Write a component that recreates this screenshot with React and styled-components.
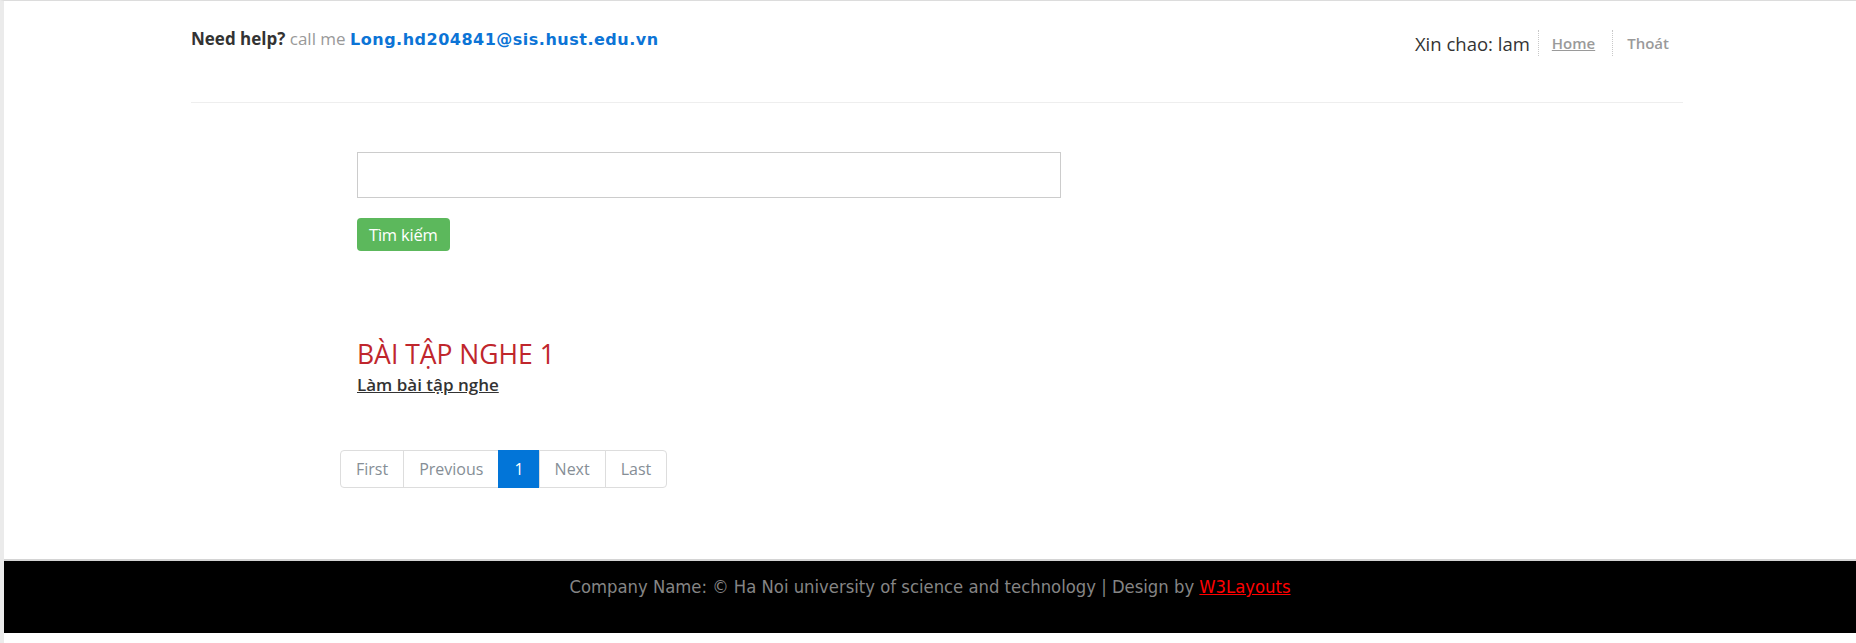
import React from 'react';
import styled, { createGlobalStyle } from 'styled-components';

const GlobalStyle = createGlobalStyle`
  html, body {
    margin: 0;
    padding: 0;
    background: #fff;
  }
  body {
    font-family: "Open Sans", "Liberation Sans", sans-serif;
    color: #333;
  }
`;

const Page = styled.div`
  min-height: 643px;
  border-top: 1px solid #dcdcdc;
  border-left: 4px solid #ebebeb;
  box-sizing: border-box;
  display: flex;
  flex-direction: column;
`;

const Header = styled.header`
  width: 1492px;
  margin-left: 187px;
  height: 102px;
  border-bottom: 1px solid #eeeeee;
  display: flex;
  justify-content: space-between;
  align-items: flex-start;
  box-sizing: border-box;
`;

const Help = styled.p`
  margin: 26px 0 0;
  font-size: 17px;
  line-height: 24px;
  color: #999;
`;

const HelpLabel = styled.strong`
  color: #333;
  font-weight: 700;
`;

const Mail = styled.a`
  font-family: "DejaVu Sans", Verdana, sans-serif;
  font-weight: 700;
  font-size: 16px;
  letter-spacing: 0.5px;
  color: #0c74d6;
  text-decoration: none;
`;

const UserNav = styled.nav`
  margin-top: 29px;
  padding-right: 14px;
  display: flex;
  align-items: center;
`;

const Greeting = styled.span`
  font-size: 18.5px;
  color: #333;
  padding-right: 8px;
`;

const NavLink = styled.a`
  display: flex;
  align-items: center;
  height: 26px;
  border-left: 1px dotted #c8c8c8;
  padding: 0 17px 0 13px;
  font-size: 15px;
  font-weight: 600;
  color: #9a9a9a;
  text-decoration: ${p => (p.$underline ? 'underline' : 'none')};
  &:last-child {
    padding: 0 0 0 14px;
  }
`;

const Main = styled.main`
  margin-left: 353px;
  padding-top: 49px;
  flex: 1;
`;

const SearchInput = styled.input`
  display: block;
  width: 704px;
  height: 46px;
  border: 1px solid #cccccc;
  box-sizing: border-box;
  padding: 6px 12px;
  font-size: 15px;
  outline: none;
`;

const SearchButton = styled.button`
  margin-top: 20px;
  height: 33px;
  padding: 0 12px;
  border: 0;
  border-radius: 4px;
  background: #5cb85c;
  color: #fff;
  font-family: "Open Sans", sans-serif;
  font-size: 16.5px;
  letter-spacing: -0.2px;
`;

const Exercise = styled.section`
  margin-top: 88px;
`;

const ExerciseTitle = styled.h3`
  margin: 0;
  font-size: 26.5px;
  line-height: 30px;
  font-weight: 400;
  color: #c0262c;
`;

const ExerciseLink = styled.a`
  display: block;
  width: max-content;
  margin-top: 4px;
  font-size: 17px;
  line-height: 24px;
  font-weight: 600;
  color: #333;
  text-decoration: underline;
`;

const Pagination = styled.ul`
  list-style: none;
  display: flex;
  margin: 53px 0 0 -17px;
  padding: 0;
`;

const PageItem = styled.li`
  margin-left: -1px;
  &:first-child {
    margin-left: 0;
  }
  &:first-child a {
    border-radius: 4px 0 0 4px;
  }
  &:last-child a {
    border-radius: 0 4px 4px 0;
  }
`;

const PageLink = styled.a`
  display: block;
  padding: 8px 15px;
  line-height: 20px;
  font-size: 16px;
  border: 1px solid ${p => (p.$active ? '#0275d8' : '#dddddd')};
  background: ${p => (p.$active ? '#0275d8' : '#fff')};
  color: ${p => (p.$active ? '#fff' : '#868e96')};
  text-align: center;
  text-decoration: none;
`;

const Footer = styled.footer`
  margin-top: 71px;
  margin-bottom: 10px;
  border-top: 2px solid #d4d4d4;
  background: #000;
  height: 74px;
  box-sizing: border-box;
  padding-top: 16px;
  text-align: center;
  font-family: "DejaVu Sans Condensed", "DejaVu Sans", Verdana, sans-serif;
  font-stretch: condensed;
  font-size: 18.3px;
  line-height: 20px;
  color: #858585;
`;

const FooterLink = styled.a`
  color: #ff0000;
  text-decoration: underline;
`;

const pages = [
  { label: 'First' },
  { label: 'Previous' },
  { label: '1', active: true },
  { label: 'Next' },
  { label: 'Last' },
];

export default function App() {
  return (
    <>
      <GlobalStyle />
      <Page>
        <Header>
          <Help>
            <HelpLabel>Need help?</HelpLabel> call me{' '}
            <Mail href="#">Long.hd204841@sis.hust.edu.vn</Mail>
          </Help>
          <UserNav>
            <Greeting>Xin chao: lam</Greeting>
            <NavLink href="#" $underline>Home</NavLink>
            <NavLink href="#">Thoát</NavLink>
          </UserNav>
        </Header>
        <Main>
          <SearchInput type="text" />
          <SearchButton>Tìm kiếm</SearchButton>
          <Exercise>
            <ExerciseTitle>BÀI TẬP NGHE 1</ExerciseTitle>
            <ExerciseLink href="#">Làm bài tập nghe</ExerciseLink>
          </Exercise>
          <Pagination>
            {pages.map(p => (
              <PageItem key={p.label}>
                <PageLink href="#" $active={p.active}>{p.label}</PageLink>
              </PageItem>
            ))}
          </Pagination>
        </Main>
        <Footer>
          Company Name: © Ha Noi university of science and technology | Design by{' '}
          <FooterLink href="#">W3Layouts</FooterLink>
        </Footer>
      </Page>
    </>
  );
}
